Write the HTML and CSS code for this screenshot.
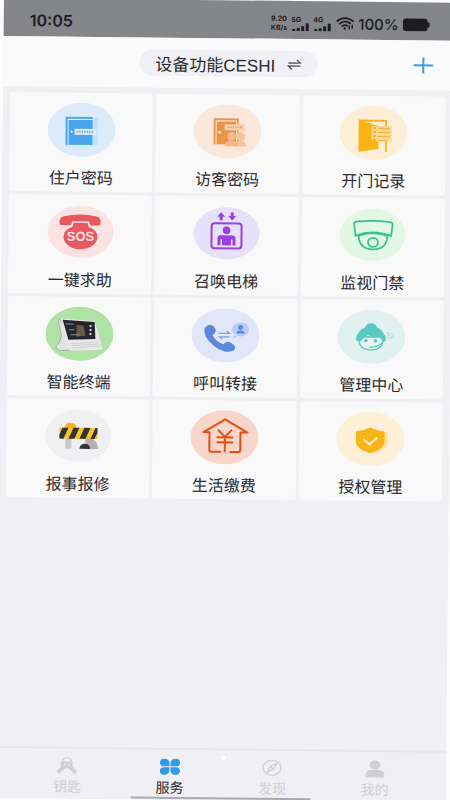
FILE: index.html
```html
<!DOCTYPE html>
<html lang="zh-CN">
<head>
  <meta charset="utf-8">
  <meta name="viewport" content="width=device-width, initial-scale=1">
  <title>服务</title>
  <link rel="stylesheet" href="styles.css">
</head>
<body>
  <div class="phone">
    <div class="status">
      <span class="time">10:05</span>
      <div class="status-right">
        <div class="speed"><span>9.20</span><span>KB/s</span></div>
        <div class="signal">
          <span>5G</span>
          <svg width="18" height="8" viewBox="0 0 18 8"><path d="M2 6v2M6.500 5v3M11 3v5M15.500 0v8" stroke="#1c1c20" stroke-width="3"/></svg>
        </div>
        <div class="signal">
          <span>4G</span>
          <svg width="18" height="8" viewBox="0 0 18 8"><path d="M2 6v2M6.500 5v3M11 3v5M15.500 0v8" stroke="#1c1c20" stroke-width="3"/></svg>
        </div>
        <svg width="19" height="14" viewBox="0 0 19 14" fill="none" stroke="#1c1c20" stroke-width="1.800">
          <path d="M1 5Q9 -2 18 5M3.500 7.500Q9 3 15 7M6 10Q9 7.500 12 9.500"/>
          <circle cx="9" cy="12" r="1.200" fill="#1c1c20" stroke="none"/>
          <path d="M13.500 9v4M16.500 8v4" stroke-width="1.500"/>
        </svg>
        <span class="percent">100%</span>
        <svg width="27" height="13" viewBox="0 0 27 13" fill="#1c1c20"><rect width="25" height="13" rx="4"/><rect x="24" y="4" width="3" height="5" rx="1"/></svg>
      </div>
    </div>

    <header class="header">
      <button class="device">
        设备功能CESHI
        <svg width="14" height="11" viewBox="0 0 14 11" fill="none" stroke="#55555a" stroke-width="1.300"><path d="M1 4h12L9.500 .8M13 7H1l3.500 3.200"/></svg>
      </button>
      <button class="add" aria-label="添加">
        <svg width="20" height="18" viewBox="0 0 20 18" stroke="#3a9be0" stroke-width="2"><path d="M0 9h20M10 1v16"/></svg>
      </button>
    </header>

    <main class="services">
      <button class="card">
        <svg class="icon" viewBox="0 0 68 54">
          <ellipse cx="34" cy="27" rx="34" ry="27" fill="#dcebfa"/>
          <path d="M45 15h5v27h-5z" fill="#c3e0f9"/>
          <path d="M18 14h27v28H18z" fill="#4ba5ec"/>
          <path d="M20.500 42V16.500H45" fill="none" stroke="#dcebfa"/>
          <path d="M27 26h22v6H27z" fill="#dcebfa"/>
          <path d="M29 29h17" stroke="#6f9fc8" stroke-width="1.500" stroke-dasharray="1.500 1"/>
          <circle cx="24" cy="29" r="1" fill="#fff"/>
        </svg>
        <span>住户密码</span>
      </button>
      <button class="card">
        <svg class="icon" viewBox="0 0 68 54">
          <ellipse cx="34" cy="27" rx="34" ry="27" fill="#fbe8da"/>
          <path d="M20 14h25v26H20z" fill="#e8954a"/>
          <path d="M22.500 40V16.500H43V40" fill="none" stroke="#fbe8da"/>
          <circle cx="26" cy="28" r="1.300" fill="#fff"/>
          <path d="M31 20h20v6H31z" fill="#f8cfae"/>
          <path d="M34 23h15" stroke="#e09a62" stroke-width="1.500" stroke-dasharray="1.500 1"/>
          <g fill="#f6c49b"><circle cx="47" cy="32" r="4.500"/><path d="M42 42q0-6 5-6t6 6z"/></g>
          <g fill="#f4b98a"><circle cx="38" cy="32" r="4.500"/><path d="M31 42q0-6 7-6t7 6z"/></g>
        </svg>
        <span>访客密码</span>
      </button>
      <button class="card">
        <svg class="icon" viewBox="0 0 68 54">
          <ellipse cx="34" cy="27" rx="34" ry="27" fill="#fdefd7"/>
          <path d="M20 16V14.800H46.500V46" fill="none" stroke="#f5b11d" stroke-width="1.800"/>
          <path d="M19 14l20 6v23l-20 3z" fill="#f9b516"/>
          <path d="M32 20h20v16H38l-6-2z" fill="#fbd98c"/>
          <path d="M35 21v14" stroke="#e6a52c" stroke-width="2" stroke-dasharray="2 2"/>
          <path d="M38 22.500h12M38 26.500h12M38 30.500h12M38 34.500h10" stroke="#edb54b" stroke-width="1.200"/>
        </svg>
        <span>开门记录</span>
      </button>
      <button class="card">
        <svg class="icon" viewBox="0 0 68 54">
          <ellipse cx="34" cy="27" rx="33" ry="26" fill="#fbe3e4"/>
          <path d="M13 19q-1-6 4-7.500Q34 8 50 11.500q5 1.500 4 7.500q0 1.500-2 1.500h-7q-2 0-2.500-4h-17q-.5 4-2.500 4h-8q-2 0-2-1.500z" fill="#e6595e"/>
          <path d="M27 18h14l1 4q9 3 9 10c0 7-8 12.500-17 12.500s-17-5.500-17-12.500q0-7 9-10z" fill="#e6595e"/>
          <text class="sos" x="34" y="36" text-anchor="middle">SOS</text>
        </svg>
        <span>一键求助</span>
      </button>
      <button class="card">
        <svg class="icon" viewBox="0 0 68 54">
          <ellipse cx="34" cy="27" rx="33" ry="26" fill="#e5e1f8"/>
          <rect x="19" y="17" width="30" height="25" rx="3" fill="none" stroke="#9a3fe0" stroke-width="2"/>
          <g fill="#9a3fe0">
            <path d="M28.500 6l4 4.500h-2.500V14h-3v-3.500h-2.500zM39.500 14l4-4.500h-2.500V6h-3v3.500h-2.500z"/>
            <circle cx="34" cy="24" r="3.800"/>
            <path d="M25 39v-7q0-3 3-3h12q3 0 3 3v7h-3v-6h-1.500v6h-9v-6H28v6z"/>
          </g>
        </svg>
        <span>召唤电梯</span>
      </button>
      <button class="card">
        <svg class="icon" viewBox="0 0 68 54">
          <ellipse cx="34" cy="27" rx="33" ry="26" fill="#e3f8e4"/>
          <g fill="none" stroke="#37c294" stroke-width="1.800">
            <path d="M17.500 14Q34 12 51.500 14q2.500 0 2.500 2.500L52.500 28Q34 21 17 28L15.500 16.500Q15.500 14 17.500 14z"/>
            <path d="M20 28q1 13.500 14.500 13.500T49 28Q34 22.500 20 28z"/>
            <ellipse cx="34.500" cy="34.500" rx="5" ry="4.500"/>
          </g>
        </svg>
        <span>监视门禁</span>
      </button>
      <button class="card">
        <svg class="icon" viewBox="0 0 68 54">
          <ellipse cx="34" cy="27" rx="34" ry="27" fill="#afe3a5"/>
          <path d="M14 12q-2 1-1 4l3 13q-1 7-5 10q-1 4 4 5l14-1z" fill="#e2e2e4" stroke="#8a948a" stroke-width=".6"/>
          <path d="M15 12l34 2 8 27q1 2-3 2l-27 1q-4 0-5-4z" fill="#e8e8ea"/>
          <path d="M17 13l32 2 1 17-27 1z" fill="#25262b"/>
          <path d="M31 18l7 1 2 10-9 1z" fill="#6c5a42"/>
          <path d="M20 17l8 .5M23 23h6M25 28h9" stroke="#8b8d92"/>
          <path d="M45 18v12" stroke="#dfe5ec" stroke-width="1.800" stroke-dasharray="2 2"/>
          <path d="M25 37l28-2M26 39l28-2M27 41l28-2" stroke="#cdcdd1" stroke-width=".8"/>
        </svg>
        <span>智能终端</span>
      </button>
      <button class="card">
        <svg class="icon" viewBox="0 0 68 54">
          <ellipse cx="34" cy="27" rx="34" ry="27" fill="#e1e6f8"/>
          <path d="M15 18q4-3 7 0l2 3q1 3-3 6q3 6 11 9q3-4 7-2l4 3q2 3-1 5q-8 4-19-4Q11 29 13 20z" fill="#5b86de"/>
          <path d="M27 25h11l-3-2.500M38 28.500H28l3 2.500" fill="none" stroke="#7f9bdf" stroke-width="1.200"/>
          <path d="M42 27l-1 3 5-2z" fill="#b7cdf4"/>
          <ellipse cx="49" cy="21" rx="8.500" ry="7" fill="#b7cdf4"/>
          <circle cx="49" cy="19" r="2.500" fill="#5b86de"/>
          <path d="M45 25q0-3 4-3t4 3z" fill="#5b86de"/>
        </svg>
        <span>呼叫转接</span>
      </button>
      <button class="card">
        <svg class="icon" viewBox="0 0 68 54">
          <ellipse cx="34" cy="27" rx="34" ry="27" fill="#e0f1ef"/>
          <path d="M21 27q0 13 12.500 13T46 27z" fill="#e8f5f3" stroke="#58cabf" stroke-width="1.300"/>
          <ellipse cx="33.500" cy="18" rx="6" ry="4.500" fill="#58cabf"/>
          <path d="M19 31q-1-4 1-6q3-8 13.500-8T47 25q2 2 1 6l-3 1q-1-4-4-5q-7 0-11-2-4 3-7 7z" fill="#58cabf"/>
          <circle cx="28.500" cy="31" r="1.800" fill="#58cabf"/>
          <circle cx="38" cy="31" r="1.800" fill="#58cabf"/>
          <path d="M32 37q6 1 13-4" fill="none" stroke="#58cabf" stroke-width="1.300"/>
          <path d="M49 27q3 0 3 2M49 25q5 0 5 4M49 23q6-1 7 5" fill="none" stroke="#a5dcd5" stroke-width=".9"/>
        </svg>
        <span>管理中心</span>
      </button>
      <button class="card">
        <svg class="icon" viewBox="0 0 68 54">
          <ellipse cx="34" cy="27" rx="33" ry="26" fill="#f0f0f2"/>
          <path d="M20 20q0-6 6-6t6 6z" fill="#f3b01f"/>
          <path d="M21 29h6v11h-6z" fill="#c9c9cb"/>
          <path d="M41 29h5q7 2 8 11H41z" fill="#b3b3b6"/>
          <path d="M35 40q1-5 5.500-5t5.500 5z" fill="#333336"/>
          <path d="M15 19h38v11H15z" fill="#f7c325"/>
          <path d="M18 19h6l-5 11h-4v-4zM29 19h6l-5 11h-6zM40 19h6l-5 11h-6zM51 19h2v5l-3 6h-4z" fill="#333336"/>
        </svg>
        <span>报事报修</span>
      </button>
      <button class="card">
        <svg class="icon" viewBox="0 0 68 54">
          <ellipse cx="34" cy="27" rx="34" ry="27" fill="#fad5ca"/>
          <g fill="none" stroke="#e2500f" stroke-width="2" stroke-linejoin="round" stroke-linecap="round">
            <path d="M30 41.500H21q-2 0-2-2V22h-6L34.500 9 57 22h-7v17.500q0 2-2 2h-8"/>
            <path d="M28 20l6.500 6.500L41 20M34.500 26.500V41M27 27h15M27 32h15"/>
          </g>
        </svg>
        <span>生活缴费</span>
      </button>
      <button class="card">
        <svg class="icon" viewBox="0 0 68 54">
          <ellipse cx="34" cy="27" rx="34" ry="27" fill="#fdf0d6"/>
          <path d="M36 18l13 2q2 0 2 2v9q-2 8-15 10z" fill="#fbdc91"/>
          <path d="M34 15.500q6 3.500 14 4V31q-2 7-14 10.500Q21 38 19.500 31V19.500q8-.5 14.500-4z" fill="#f7b519"/>
          <path d="M27 27.500l6 5 8-7" fill="none" stroke="#fdeec6" stroke-width="2"/>
        </svg>
        <span>授权管理</span>
      </button>
    </main>

    <nav class="tabs">
      <a class="tab" href="#keys">
        <svg width="22" height="18" viewBox="0 0 22 18" fill="none" stroke="#cfcfd4">
          <circle cx="11" cy="6" r="5" stroke-width="1.200"/>
          <path d="M9 9l-7 7M13 9l7 7" stroke-width="4"/>
          <circle cx="8.500" cy="8" r="2.500" stroke-width="2.500"/>
          <circle cx="13" cy="8" r="2.500" stroke-width="2"/>
        </svg>
        <span>钥匙</span>
      </a>
      <a class="tab active" href="#services">
        <svg width="22" height="18" viewBox="0 0 22 18" fill="#2f9bea">
          <path d="M10.500 8.500H5Q1 8.500 1 4.800T5 1q5.500 0 5.500 5zM11.500 8.500H17q4 0 4-3.700T17 1q-5.500 0-5.500 5zM10.500 9.500H5q-4 0-4 3.700T5 17q5.500 0 5.500-5zM11.500 9.500H17q4 0 4 3.700T17 17q-5.500 0-5.500-5z"/>
        </svg>
        <span>服务</span>
      </a>
      <a class="tab" href="#discover">
        <svg width="22" height="18" viewBox="0 0 22 18" fill="none" stroke="#cfcfd4" stroke-width="1.300">
          <ellipse cx="11" cy="9" rx="9" ry="7.500"/>
          <path d="M16 4.500l-3.500 6L6 13.500l3.500-6zM9.500 7.500l3 3"/>
        </svg>
        <span>发现</span>
      </a>
      <a class="tab" href="#me">
        <svg width="22" height="18" viewBox="0 0 22 18" fill="#cfcfd4">
          <ellipse cx="11" cy="5" rx="5.500" ry="4.500"/>
          <path d="M1.500 16q0-6 6-6h7q6 0 6 6 0 1.500-1.500 1.500H3q-1.500 0-1.500-1.500z"/>
        </svg>
        <span>我的</span>
      </a>
      <span class="dot"></span>
      <span class="home-bar"></span>
    </nav>
  </div>
</body>
</html>
```

FILE: styles.css
```css
* {
  box-sizing: border-box;
}

body {
  margin: 0;
  height: 100vh;
  overflow: hidden;
  background-color: #fcfcfc;
  color: #2b2b2e;
  font-family: "Noto Sans CJK SC", sans-serif;
}

button {
  border: none;
  color: inherit;
  font-family: inherit;
  cursor: pointer;
}

/* the whole screen leans slightly */
.phone {
  display: flex;
  flex-direction: column;
  width: 100%;
  height: 100vh;
  margin: -2px 0 0 4px;
  background-color: #efeff4;
  transform: rotate(0.6deg);
  transform-origin: 0 0;
}

/* Status bar */
.status {
  display: flex;
  justify-content: space-between;
  align-items: center;
  height: 38px;
  padding: 6px 24px 0 26px;
  background-color: #85868a;
  color: #1c1c20;
  font-family: Inter, sans-serif;
}

.time {
  font-size: 16px;
  font-weight: 600;
}

.status-right {
  display: flex;
  align-items: center;
  gap: 4px;
}

.speed {
  display: flex;
  flex-direction: column;
  font-size: 7px;
  font-weight: 700;
  line-height: 9px;
}

.signal {
  display: flex;
  flex-direction: column;
  font-size: 7px;
  font-weight: 700;
  line-height: 7px;
}

.percent {
  font-size: 15px;
  font-weight: 500;
}

/* Header */
.header {
  display: grid;
  grid-template-columns: 1fr auto 1fr;
  align-items: center;
  height: 50px;
  padding: 0 20px;
  background-color: #fafafa;
}

.device {
  grid-column: 2;
  display: flex;
  align-items: center;
  gap: 12px;
  height: 26px;
  padding: 0 16px;
  border-radius: 13px;
  background-color: #f0f0f5;
  font-family: "Liberation Sans", "Noto Sans CJK SC", sans-serif;
  font-size: 17px;
}

.add {
  display: flex;
  justify-self: end;
  padding: 0;
  background: none;
}

/* Service grid */
.services {
  display: grid;
  grid-template-columns: repeat(3, 1fr);
  gap: 3px;
  padding: 6px 7px;
}

.card {
  display: flex;
  flex-direction: column;
  align-items: center;
  gap: 8px;
  padding: 10px 0 3px;
  border-radius: 3px;
  background-color: #f9f9fa;
  font-size: 16px;
  line-height: 24px;
}

.icon {
  width: 68px;
  height: 54px;
}

.sos {
  fill: #fbe3e4;
  font-family: "Liberation Sans", sans-serif;
  font-size: 13px;
  font-weight: 700;
}

/* Bottom tabs */
.tabs {
  position: relative;
  display: grid;
  grid-template-columns: repeat(4, 1fr);
  height: 52px;
  margin-top: auto;
  padding: 8px 20px 0;
  border-top: 2px solid #e5e5ea;
}

.tab {
  display: flex;
  flex-direction: column;
  align-items: center;
  gap: 1px;
  color: #cfcfd4;
  font-size: 14px;
  line-height: 20px;
  text-decoration: none;
}

.tab.active {
  color: #2b2b2e;
}

.dot {
  position: absolute;
  top: 5px;
  left: 50%;
  width: 5px;
  height: 5px;
  border-radius: 50%;
  background-color: #fff;
}

.home-bar {
  position: absolute;
  bottom: 1px;
  left: 30%;
  width: 40%;
  height: 2px;
  border-radius: 1px;
  background-color: #a9a9ae;
}
```
